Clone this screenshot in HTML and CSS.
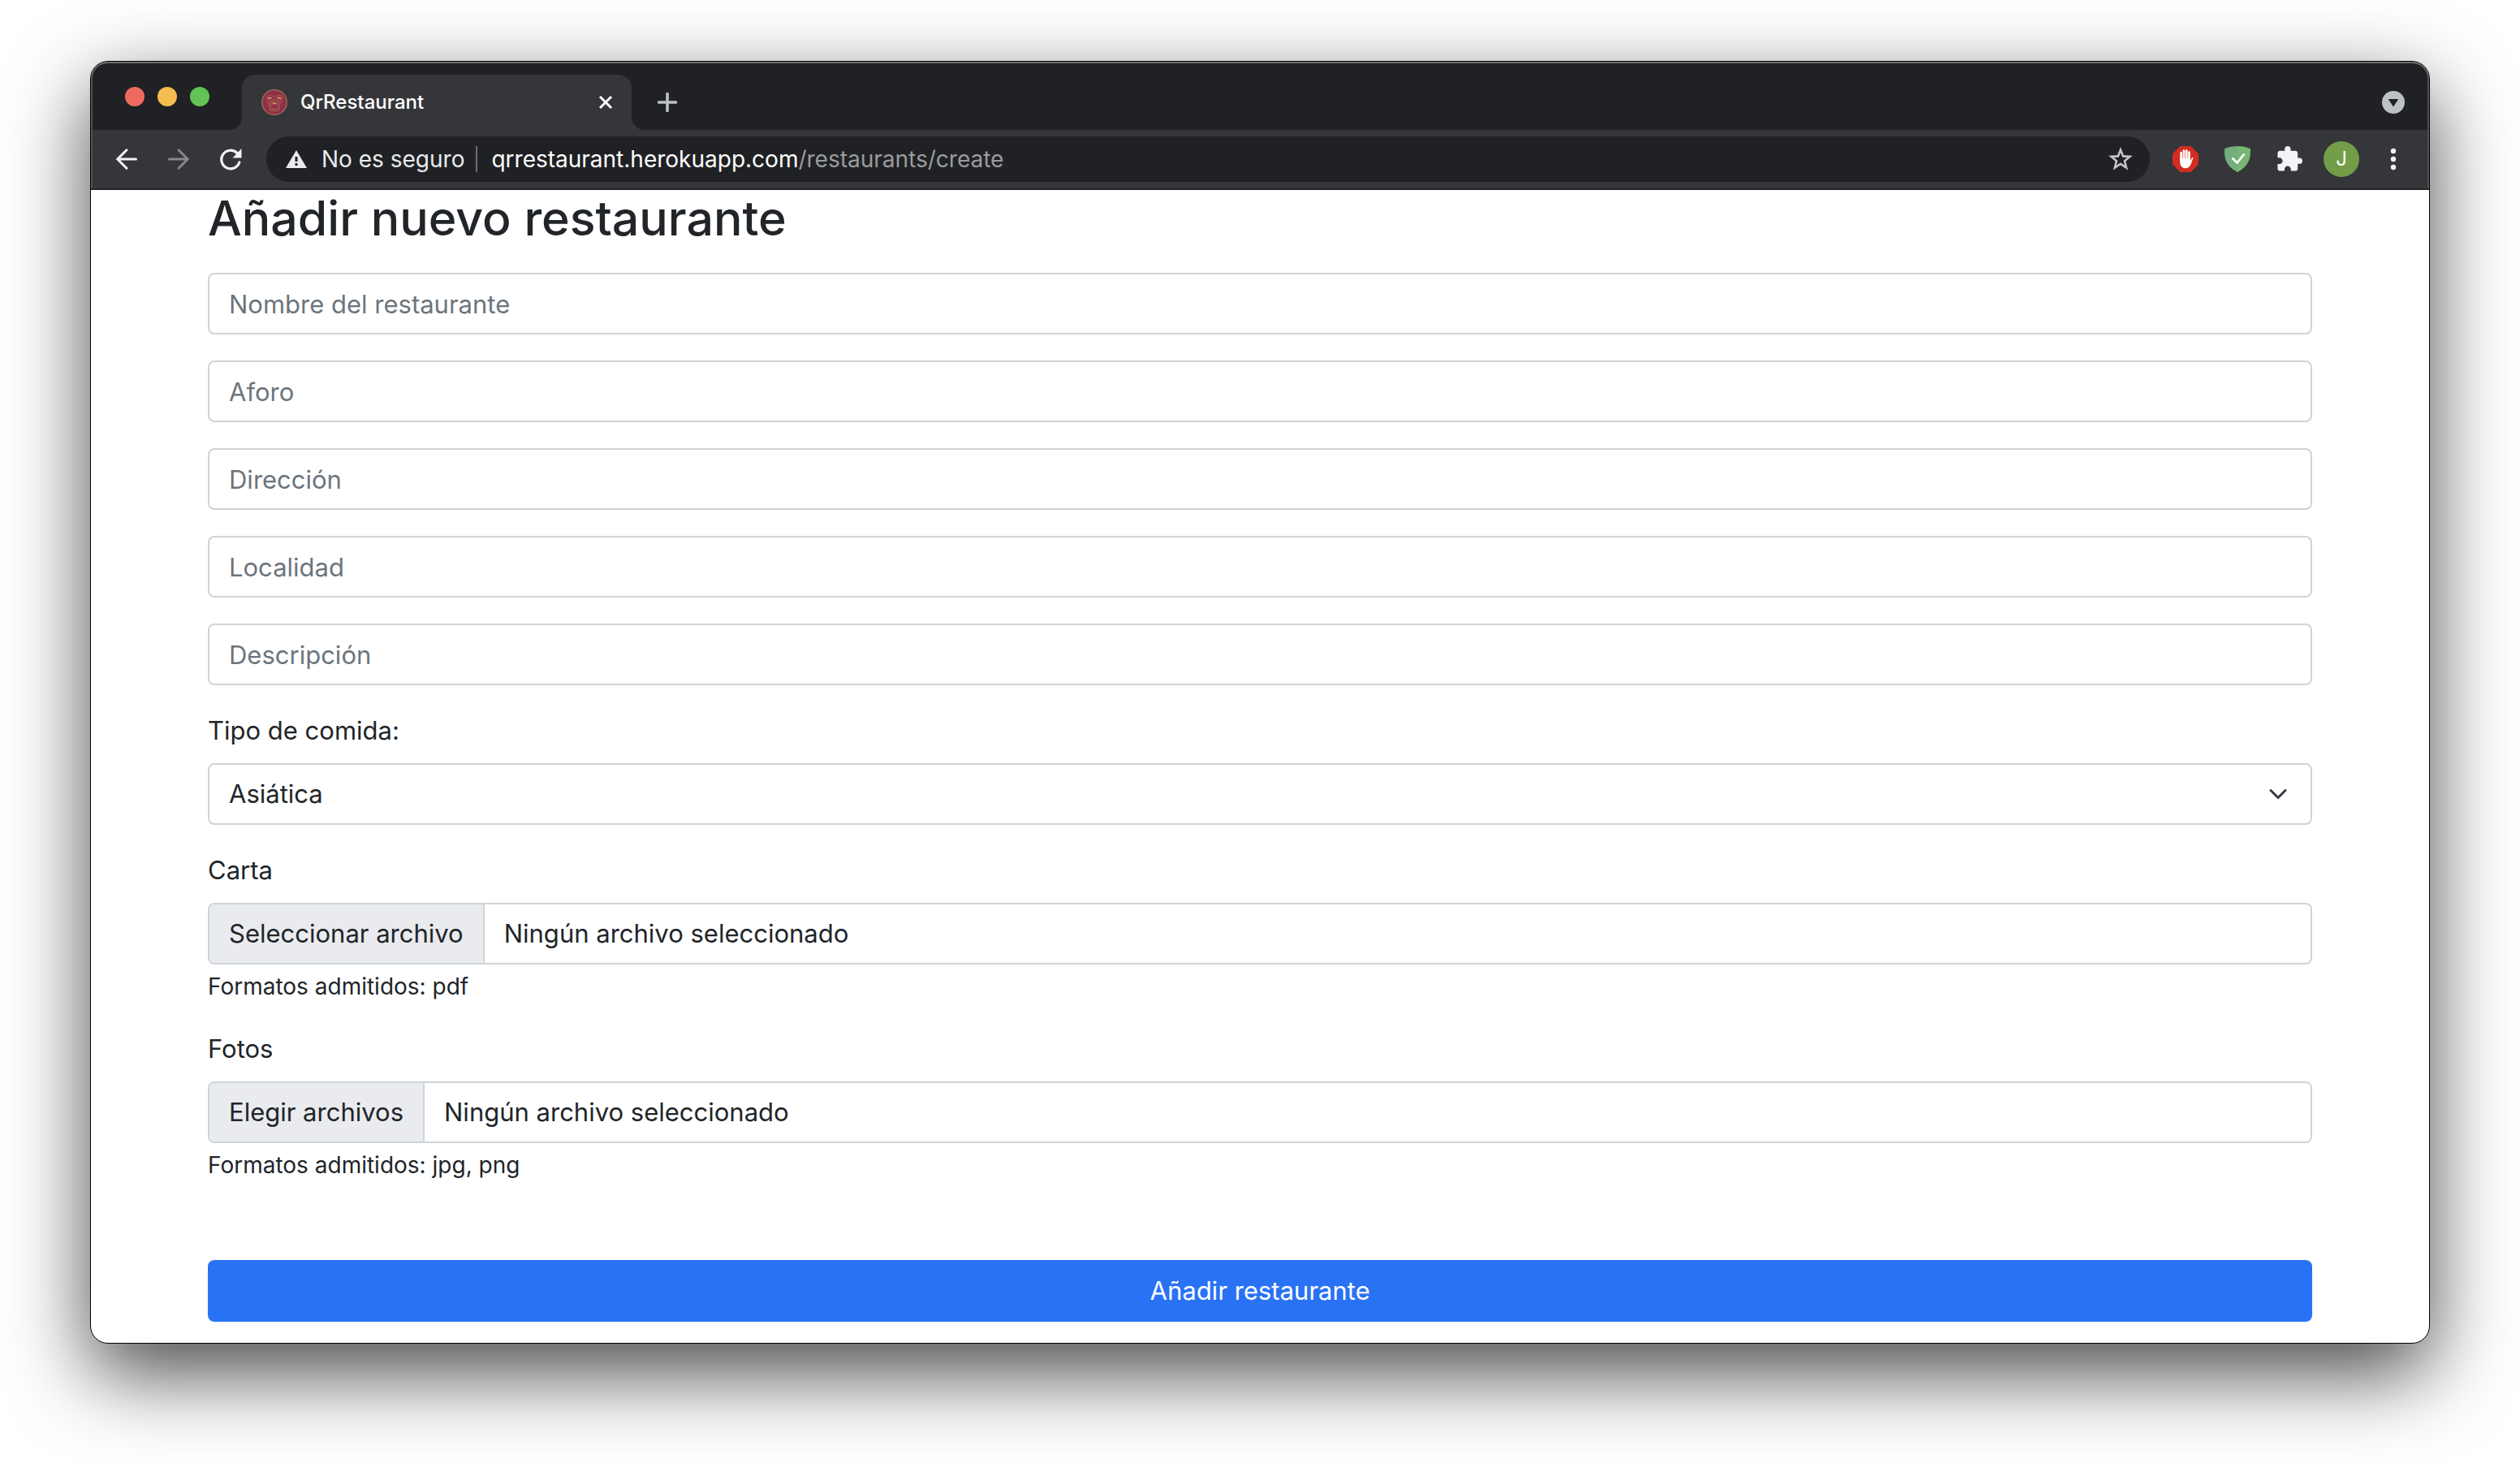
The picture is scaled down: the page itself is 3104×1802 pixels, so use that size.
FILE: index.html
```html
<!DOCTYPE html>
<html lang="es">
<head>
<meta charset="utf-8">
<meta name="viewport" content="width=device-width, initial-scale=1">
<title>QrRestaurant</title>
<link rel="stylesheet" href="styles.css">
</head>
<body>
<div class="window">
  <header class="chrome">
    <div class="tab-strip">
      <div class="lights">
        <button class="light light-close" type="button" aria-label="Cerrar ventana"></button>
        <button class="light light-min" type="button" aria-label="Minimizar"></button>
        <button class="light light-max" type="button" aria-label="Maximizar"></button>
      </div>
      <div class="tab">
        <svg class="favicon" viewBox="0 0 32 32" aria-hidden="true">
          <circle cx="16" cy="16" r="15.300" fill="#8f2f49" stroke="#a07a55" stroke-width="1.200"/>
          <g fill="none" stroke="#a9604d" stroke-width=".9">
            <path d="M5 8.500q5-2 10 0q1 1 2 0q5-2 10 0M5 11q5 4 11 2q6 2 11-2M6 14q4 3 10 1q6 2 10-1M7 17q4 2 6 0M19 17q3 2 6 0M9 20q3 1 4-1M19 19q1 2 4 1M10 22q6 4 12 0M10 24q6 4 12 0M11 26q5 2 10 0M10 18v8M22 18v8M13 16v5M19 16v5"/>
          </g>
          <path d="M7.500 11q2.500-1 5 0M19.500 11q2.500-1 5 0M14 17.500h4" fill="none" stroke="#d6b06b" stroke-width="1.400"/>
        </svg>
        <span class="tab-title">QrRestaurant</span>
        <button class="icon-button" type="button" aria-label="Cerrar pestaña">
          <svg width="18" height="18" viewBox="0 0 18 18"><path d="M2 2l14 14M16 2L2 16" stroke="#fff" stroke-width="3"/></svg>
        </button>
      </div>
      <button class="icon-button new-tab" type="button" aria-label="Nueva pestaña">
        <svg width="24" height="24" viewBox="0 0 24 24"><path d="M12 1.500v21M1.500 12h21" stroke="#bdc1c6" stroke-width="3.600" stroke-linecap="round"/></svg>
      </button>
      <button class="icon-button tab-search" type="button" aria-label="Buscar pestañas">
        <svg width="28" height="28" viewBox="0 0 28 28"><circle cx="14" cy="14" r="14" fill="#bdc1c6"/><path d="M7.700 10h12.600L14 19.500z" fill="#202124"/></svg>
      </button>
    </div>
    <div class="toolbar">
      <nav class="nav">
        <button class="icon-button" type="button" aria-label="Atrás">
          <svg width="28" height="28" viewBox="0 0 28 28"><path d="M25.500 14H3M14 2.800L2.800 14 14 25.200" fill="none" stroke="#f1f3f4" stroke-width="3" stroke-linecap="round"/></svg>
        </button>
        <button class="icon-button" type="button" aria-label="Adelante">
          <svg width="28" height="28" viewBox="0 0 28 28"><path d="M2.500 14H25M14 2.800L25.200 14 14 25.200" fill="none" stroke="#86878a" stroke-width="3" stroke-linecap="round"/></svg>
        </button>
        <button class="icon-button" type="button" aria-label="Recargar">
          <svg width="28" height="28" viewBox="0 0 28 28"><path d="M24.800 18A11.300 11.300 0 1 1 22 6.500" fill="none" stroke="#f1f3f4" stroke-width="3.200" stroke-linecap="round"/><path d="M27.500 1v11.500H16.500z" fill="#f1f3f4"/></svg>
        </button>
      </nav>
      <div class="omnibox">
        <svg width="26" height="22" viewBox="0 0 26 22" aria-hidden="true"><path d="M13 0l13 22H0z" fill="#e8eaed"/><path d="M11.500 8h3v6h-3zM11.500 16h3v3h-3z" fill="#202124"/></svg>
        <span class="security">No es seguro</span>
        <span class="divider"></span>
        <span class="url">qrrestaurant.herokuapp.com<span class="path">/restaurants/create</span></span>
        <button class="icon-button star" type="button" aria-label="Añadir a marcadores">
          <svg width="30" height="30" viewBox="0 0 30 30"><path d="M15 3.500l3.100 7.900 8.400.500-6.500 5.400 2.100 8.200L15 20.900l-7.100 4.600L10 17.300 3.500 11.900l8.400-.5z" fill="none" stroke="#c4c6c9" stroke-width="2.600"/></svg>
        </button>
      </div>
      <div class="extensions">
        <button class="icon-button" type="button" aria-label="AdBlock">
          <svg width="32" height="32" viewBox="0 0 32 32"><path d="M9.400 0h13.200L32 9.400v13.200L22.600 32H9.400L0 22.600V9.400z" fill="#d22d20"/><g stroke="#fff" stroke-width="2.700" stroke-linecap="round"><path d="M10.600 8v10M14 5.500V17M17.300 5.500V17M20.500 7.500V18"/></g><path d="M9.250 15h12.600v3.500l1.800-3.800q.8-1.300 1.900-.8l-3 8.600Q20.500 27.300 16 27.300q-6.750 0-6.750-8z" fill="#fff"/></svg>
        </button>
        <button class="icon-button" type="button" aria-label="AdGuard">
          <svg width="32" height="32" viewBox="0 0 32 32"><path d="M16 0C10.500 0 5 1 0 3.200c0 8-.5 20.500 16 28.800z" fill="#74ad7e"/><path d="M16 0c5.500 0 11 1 16 3.200 0 8 .5 20.500-16 28.800z" fill="#78b773"/><path d="M9.500 14.500l6 6L24.500 9.500" fill="none" stroke="#fff" stroke-width="2.600"/></svg>
        </button>
        <button class="icon-button" type="button" aria-label="Extensiones">
          <svg width="32" height="32" viewBox="1 1 22 22"><path d="M20.500 11H19V7c0-1.100-.9-2-2-2h-4V3.500a2.500 2.500 0 0 0-5 0V5H4c-1.100 0-1.990.9-1.990 2v3.800H3.500c1.490 0 2.700 1.210 2.700 2.700s-1.210 2.700-2.700 2.700H2V20c0 1.100.9 2 2 2h3.800v-1.500c0-1.490 1.210-2.700 2.700-2.700s2.700 1.210 2.700 2.700V22H17c1.100 0 2-.9 2-2v-4h1.500a2.500 2.500 0 0 0 0-5z" fill="#f1f3f4"/></svg>
        </button>
      </div>
      <button class="avatar" type="button" aria-label="Perfil">J</button>
      <button class="icon-button menu" type="button" aria-label="Menú">
        <svg width="8" height="28" viewBox="0 0 8 28"><g fill="#f1f3f4"><circle cx="4" cy="4" r="3.200"/><circle cx="4" cy="14" r="3.200"/><circle cx="4" cy="24" r="3.200"/></g></svg>
      </button>
    </div>
  </header>
  <main class="page">
    <h1 class="title">Añadir nuevo restaurante</h1>
    <form class="form">
      <input class="control" type="text" placeholder="Nombre del restaurante" aria-label="Nombre del restaurante">
      <input class="control" type="text" placeholder="Aforo" aria-label="Aforo">
      <input class="control" type="text" placeholder="Dirección" aria-label="Dirección">
      <input class="control" type="text" placeholder="Localidad" aria-label="Localidad">
      <input class="control" type="text" placeholder="Descripción" aria-label="Descripción">
      <div class="field">
        <label class="label" for="tipo">Tipo de comida:</label>
        <select class="control select" id="tipo"><option>Asiática</option></select>
      </div>
      <div class="field">
        <label class="label" for="carta">Carta</label>
        <input class="file-input" type="file" id="carta" accept=".pdf">
        <label class="control file" for="carta"><span class="file-button">Seleccionar archivo</span><span class="file-name">Ningún archivo seleccionado</span></label>
        <small class="hint">Formatos admitidos: pdf</small>
      </div>
      <div class="field">
        <label class="label" for="fotos">Fotos</label>
        <input class="file-input" type="file" id="fotos" accept=".jpg,.png" multiple>
        <label class="control file" for="fotos"><span class="file-button">Elegir archivos</span><span class="file-name">Ningún archivo seleccionado</span></label>
        <small class="hint">Formatos admitidos: jpg, png</small>
      </div>
      <button class="submit" type="submit">Añadir restaurante</button>
    </form>
  </main>
</div>
</body>
</html>
```

FILE: styles.css
```css
* { box-sizing: border-box; }

body {
  margin: 0;
  padding: 75px 111px 147px;
  background: #fff;
  color: #212529;
  font-family: Inter, "Liberation Sans", sans-serif;
  font-size: 31px;
  line-height: 48px;
}

button, input, select { font: inherit; color: inherit; }

.window {
  border: 1px solid #000;
  border-radius: 22px;
  overflow: hidden;
  background: #fff;
  box-shadow: 0 36px 100px rgba(0, 0, 0, .72);
}

/* Browser chrome */
.chrome {
  background: #35363a;
  border-bottom: 2px solid #252528;
  box-shadow: inset 0 2px #6c6f6d, inset 2px 0 #505154, inset -2px 0 #505154;
  border-radius: 21px 21px 0 0;
}

.tab-strip {
  display: flex;
  align-items: stretch;
  height: 84px;
  padding: 16px 30px 0 42px;
  background: #202124;
  border-radius: 21px 21px 0 0;
  box-shadow: inset 0 2px #6c6f6d, inset 2px 0 #505154, inset -2px 0 #505154;
}

.lights {
  display: flex;
  gap: 16px;
  width: 144px;
  padding-top: 15px;
}

.light {
  width: 24px;
  height: 24px;
  padding: 0;
  border: 0;
  border-radius: 50%;
}
.light-close { background: #ee6a5f; }
.light-min { background: #f5bd4f; }
.light-max { background: #61c454; }

.tab {
  position: relative;
  display: flex;
  align-items: center;
  width: 480px;
  padding: 0 23px 0 24px;
  gap: 16px;
  background: #35363a;
  border-radius: 16px 16px 0 0;
}
.tab::before, .tab::after {
  content: "";
  position: absolute;
  bottom: 0;
  width: 16px;
  height: 16px;
}
.tab::before {
  left: -16px;
  background: radial-gradient(circle at 0 0, transparent 16px, #35363a 16px);
}
.tab::after {
  right: -16px;
  background: radial-gradient(circle at 100% 0, transparent 16px, #35363a 16px);
}

.favicon { width: 32px; height: 32px; }

.tab-title {
  flex: 1;
  color: #fff;
  font-size: 24px;
  font-weight: 500;
}

.icon-button {
  display: flex;
  align-items: center;
  padding: 0;
  border: 0;
  background: none;
}

.new-tab { margin-left: 32px; }
.tab-search { margin-left: auto; }

.toolbar {
  display: flex;
  align-items: center;
  padding: 8px 40px 8px 30px;
}

.nav {
  display: flex;
  gap: 36px;
  margin-right: 30px;
}

.omnibox {
  display: flex;
  flex: 1;
  align-items: center;
  height: 56px;
  padding: 0 21px 0 24px;
  border-radius: 28px;
  background: #202124;
  font-size: 28px;
}

.security {
  margin: 0 14px 0 18px;
  color: #e8eaed;
}

.divider {
  width: 2px;
  height: 32px;
  margin-right: 17px;
  background: #6c6e71;
}

.url { color: #fff; }
.path { color: #9a9b9e; }
.star { margin-left: auto; }

.extensions {
  display: flex;
  gap: 32px;
  margin: 0 26px 0 28px;
}

.avatar {
  width: 44px;
  height: 44px;
  padding: 0;
  border: 0;
  border-radius: 50%;
  background: #739d48;
  color: #fff;
  font-size: 24px;
  line-height: 44px;
}

.menu { margin-left: 38px; }

/* Page */
.page {
  max-width: 2640px;
  margin: 0 auto;
  padding: 0 24px 26px;
}

.title {
  margin: 0 0 32px;
  font-size: 59px;
  font-weight: 500;
  line-height: 70px;
}

.form {
  display: flex;
  flex-direction: column;
  gap: 32px;
}

.field {
  display: flex;
  flex-direction: column;
  position: relative;
}

.label { margin-bottom: 16px; }

.control {
  width: 100%;
  height: 76px;
  padding: 12px 24px;
  border: 2px solid #ced4da;
  border-radius: 8px;
  background: #fff;
}
.control::placeholder { color: #6c757d; opacity: 1; }

.select {
  appearance: none;
  background: #fff url("data:image/svg+xml,%3Csvg xmlns='http://www.w3.org/2000/svg' viewBox='0 0 16 16'%3E%3Cpath fill='none' stroke='%23343a40' stroke-linecap='round' stroke-linejoin='round' stroke-width='2' d='M2 5l6 6 6-6'/%3E%3C/svg%3E") no-repeat right 24px center / 32px 24px;
}

.file-input {
  position: absolute;
  width: 1px;
  height: 1px;
  opacity: 0;
}

.file {
  display: flex;
  padding: 0;
  overflow: hidden;
}

.file-button {
  padding: 12px 24px;
  border-right: 2px solid #ced4da;
  background: #eaebef;
}

.file-name { padding: 12px 24px; }

.hint {
  margin-top: 6px;
  font-size: 28px;
  line-height: 42px;
}

.submit {
  height: 76px;
  margin-top: 64px;
  padding: 0;
  border: 0;
  border-radius: 8px;
  background: #2972f4;
  color: #fff;
}
```
